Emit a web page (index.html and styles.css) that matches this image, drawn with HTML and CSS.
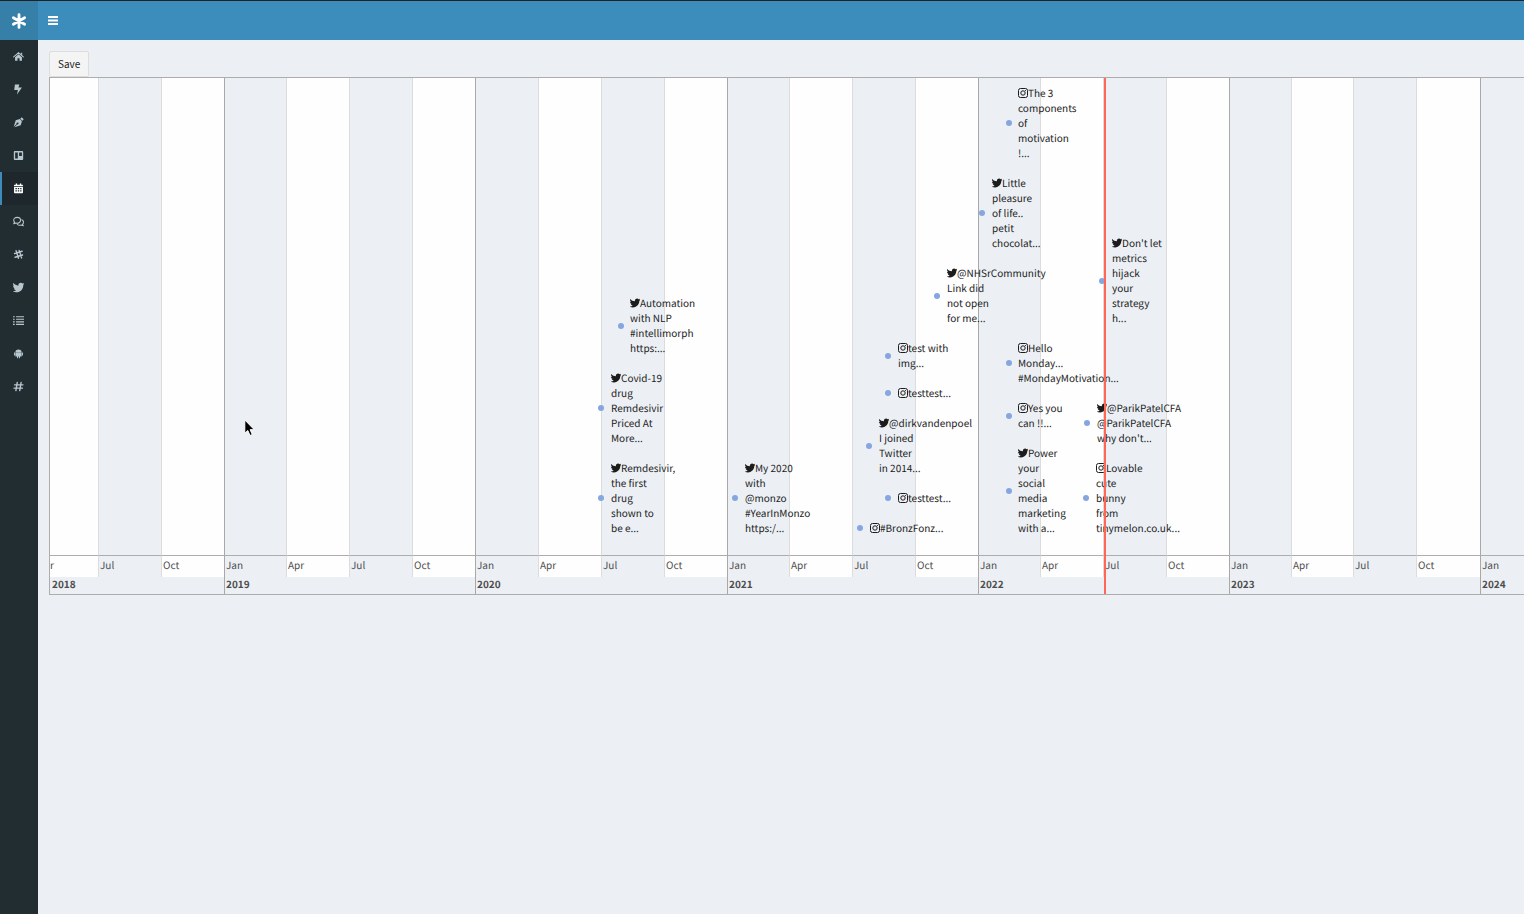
FILE: index.html
```
<!DOCTYPE html>
<html lang="en">
<head>
<meta charset="utf-8">
<title>Timeline</title>
<link rel="stylesheet" href="styles.css">
</head>
<body>
<svg class="defs" aria-hidden="true">
  <symbol id="twitter" viewBox="20 20 472 472"><path fill="currentColor" d="M459.37 151.716c.325 4.548.325 9.097.325 13.645 0 138.72-105.583 298.558-298.558 298.558-59.452 0-114.68-17.219-161.137-47.106 8.447.974 16.568 1.299 25.34 1.299 49.055 0 94.213-16.568 130.274-44.832-46.132-.975-84.792-31.188-98.112-72.772 6.498.974 12.995 1.624 19.818 1.624 9.421 0 18.843-1.3 27.614-3.573-48.081-9.747-84.143-51.98-84.143-102.985v-1.299c13.969 7.797 30.214 12.67 47.431 13.319-28.264-18.843-46.781-51.005-46.781-87.391 0-19.492 5.197-37.36 14.294-52.954 51.655 63.675 129.3 105.258 216.365 109.807-1.624-7.797-2.599-15.918-2.599-24.04 0-57.828 46.782-104.934 104.934-104.934 30.213 0 57.502 12.67 76.67 33.137 23.715-4.548 46.456-13.32 66.599-25.34-7.798 24.366-24.366 44.833-46.132 57.827 21.117-2.273 41.584-8.122 60.426-16.243-14.292 20.791-32.161 39.308-52.628 54.253z"/></symbol>
  <symbol id="instagram" viewBox="0 0 20 20"><g fill="none" stroke="currentColor" stroke-width="2"><rect x="1" y="1" width="18" height="18" rx="4"/><circle cx="10" cy="10" r="4.4"/></g><circle cx="15" cy="5" r="1.2" fill="currentColor"/></symbol>
</svg>
<div class="app">
  <nav class="sidebar" aria-label="Main">
    <a class="logo" href="#" aria-label="Home page"><svg viewBox="0 0 16 16"><path d="M8 1.6v12.8M2.4 4.8l11.2 6.4M13.6 4.8L2.4 11.2" stroke="currentColor" stroke-width="2.8" stroke-linecap="round"/></svg></a>
    <a href="#" aria-label="Home"><svg viewBox="0 0 16 16"><path fill="currentColor" d="M8 4.8l5 4.2v5H9.5v-3.6h-3V14H3V9z"/><path d="M1 8.6L8 2.6l7 6" fill="none" stroke="currentColor" stroke-width="1.5" stroke-linecap="round"/><path fill="currentColor" d="M11.4 2.6h2v4l-2-1.8z"/></svg></a>
    <a href="#" aria-label="Activity"><svg viewBox="0 0 16 16"><path fill="currentColor" d="M2.8 .6h6.400L8 5h5L5.800 15.400l1.300-6.600H1.800z"/></svg></a>
    <a href="#" aria-label="Write"><svg viewBox="0 0 16 16"><path fill="currentColor" d="M12.600.4l3 3-2 2-3-3zM9.900 3l3.100 3.100-1.800 5.900L2 15l4-4.200a1.500 1.500 0 1 0-.8-.8L1 14l3-9.200z"/></svg></a>
    <a href="#" aria-label="Board"><svg viewBox="0 0 16 16"><path fill="currentColor" fill-rule="evenodd" d="M2.500 1.500h11a1.300 1.300 0 0 1 1.300 1.300v10.400a1.300 1.300 0 0 1-1.300 1.300h-11a1.300 1.300 0 0 1-1.300-1.300V2.800a1.300 1.300 0 0 1 1.300-1.300zm.6 2v8.800H7V3.500zm5.800 0v5.300h4V3.500z"/></svg></a>
    <a class="active" href="#" aria-label="Calendar" aria-current="page"><svg viewBox="0 0 16 16"><path fill="currentColor" fill-rule="evenodd" d="M4 .8h2v1.700h4V.8h2v1.700h1.700a.8.8 0 0 1 .8.8v1.500h-13V3.300a.8.8 0 0 1 .8-.8H4zM1.500 5.800h13v8a1 1 0 0 1-1 1h-11a1 1 0 0 1-1-1zM3.600 7.300v1.800h2V7.300zm3.400 0v1.800h2V7.300zm3.400 0v1.800h2V7.300zm-6.800 3.400v1.800h2v-1.800zm3.400 0v1.800h2v-1.800zm3.400 0v1.800h2v-1.800z"/></svg></a>
    <a href="#" aria-label="Conversations"><svg viewBox="0 0 16 16"><g fill="none" stroke="currentColor" stroke-width="1.5" stroke-linejoin="round" stroke-linecap="round"><path d="M2.200 9 L1 11.400 L4 10.300 C7.500 11.200 11 9.300 11 6.300 C11 3.800 8.800 2 6 2 C3.200 2 1 3.800 1 6.300 C1 7.400 1.400 8.300 2.200 9 Z"/><path d="M12.800 5.400 C16 6.800 15.800 10.300 13.800 11.800 L15 14.200 L12 13.200 C9.800 13.900 7.400 13.200 6.200 12"/></g></svg></a>
    <a href="#" aria-label="Slack"><svg viewBox="0 0 16 16"><path d="M4.500 2.500L8 13.500M9 2l3.500 11M2.300 6.500l11-3.200M3 12l11-3.300" fill="none" stroke="currentColor" stroke-width="2" stroke-linecap="round"/></svg></a>
    <a href="#" aria-label="Twitter"><svg><use href="#twitter"/></svg></a>
    <a href="#" aria-label="List"><svg viewBox="0 0 16 16"><path d="M0 2.500h2.500M4.500 2.500H16M0 6.200h2.500M4.500 6.200H16M0 9.900h2.500M4.500 9.900H16M0 13.600h2.500M4.500 13.600H16" stroke="currentColor" stroke-width="1.700"/></svg></a>
    <a href="#" aria-label="Android"><svg viewBox="0 0 16 16"><path fill="currentColor" d="M3.500 6a4.500 4 0 0 1 9 0zM3.500 6.600h9v5.800h-2.400V15H8.600v-2.600H7.400V15H5.900v-2.600H3.500zM1.500 6.600H3v4.400H1.500zM13 6.600h1.500v4.400H13z"/></svg></a>
    <a href="#" aria-label="Hashtags"><svg viewBox="0 0 16 16"><path d="M6.200 2L4.200 14M11.800 2l-2 12M2.300 5.600h12.200M1.500 10.400h12.200" stroke="currentColor" stroke-width="2" stroke-linecap="round"/></svg></a>
  </nav>
  <div class="page">
    <header class="topbar">
      <button class="menu" type="button" aria-label="Toggle navigation"><svg viewBox="0 0 10 9"><path d="M0 1h10M0 4.500h10M0 8h10" stroke="currentColor" stroke-width="1.900"/></svg></button>
    </header>
    <main class="content">
      <button class="save" type="button">Save</button>
      <section class="timeline" id="timeline" aria-label="Timeline of posts"></section>
    </main>
  </div>
</div>
<svg class="pointer" viewBox="0 0 12 18" aria-hidden="true"><path d="M.8 1v13.200l3-2.700 2.200 5 2.300-1-2.200-4.800h4.200z" fill="#000" stroke="#fff" stroke-width="1"/></svg>
<script src="script.js"></script>
</body>
</html>
```

FILE: styles.css
```
* { box-sizing: border-box; }
body {
  margin: 0;
  font-family: "Noto Sans CJK SC", "Noto Sans", sans-serif;
  font-size: 10px;
  line-height: 15px;
  text-rendering: geometricPrecision;
  color: #1c1c1c;
  background: #ecf0f5;
}
button { font: inherit; color: inherit; }
.defs { position: absolute; width: 0; height: 0; }
.app { display: flex; min-height: 100vh; border-top: 1px solid #222; }
.sidebar { flex: 0 0 38px; display: flex; flex-direction: column; background: #222d32; }
.sidebar a {
  display: flex;
  align-items: center;
  justify-content: center;
  height: 33px;
  padding-right: 3px;
  border-left: 2px solid transparent;
  color: #b8c7ce;
}
.sidebar svg { width: 11px; height: 11px; }
.sidebar .active { background: #1e282c; border-left-color: #3c8dbc; color: #fff; }
.sidebar .logo { height: 39px; padding: 0; background: #367fa9; color: #fff; border-left: 0; }
.sidebar .logo svg { width: 16px; height: 16px; }
.page { flex: 1; min-width: 0; }
.topbar { display: flex; align-items: center; height: 39px; padding-left: 10px; background: #3c8dbc; }
.menu { display: flex; padding: 0; border: 0; background: none; color: #fff; }
.menu svg { width: 10px; height: 9px; }
.content { padding: 11px 0 0 11px; }
.save {
  display: block;
  height: 26px;
  padding: 0 8px 2px;
  border: 1px solid #ddd;
  border-radius: 2px;
  background: #f4f4f4;
}
.timeline {
  position: relative;
  display: flex;
  overflow: hidden;
  border: 1px solid #adadad;
  border-right: 0;
}
.quarter { flex: none; display: flex; flex-direction: column; }
.quarter:last-of-type { flex: 1 0 44px; }
.plot, .month, .year { border-left: 1px solid #dcdcdc; }
.plot { height: 478px; border-bottom: 1px solid #adadad; }
.month { height: 21px; padding: 1px; white-space: nowrap; color: #4d4d4d; }
.year { height: 17px; padding: 0 1px; line-height: 13px; font-weight: 700; color: #4d4d4d; border-left-color: transparent; }
.year-start > div { border-left-color: #a8a8a8; }
.shaded .plot, .shaded .month { background: #fefefe; }
.cut .plot, .cut .month { border-left: 0; }
.cut .month { padding-left: 0; }
.item { position: absolute; white-space: nowrap; }
.item svg { width: 10px; height: 10px; vertical-align: -1px; }
.dot { position: absolute; width: 6px; height: 6px; border-radius: 50%; background: #86a6e0; }
.now { position: absolute; top: 0; bottom: 0; width: 2px; background: #ff6655; }
.pointer { position: absolute; left: 244px; top: 419px; width: 12px; height: 18px; }
```

FILE: script.js
```
const timeline = document.getElementById("timeline");

// Quarter columns: width in pixels at the current zoom, starting April 2018
const widths = [48, 63, 63, 62, 63, 63, 63, 63, 63, 63, 63, 62, 63, 63, 63, 62, 63, 63, 63, 62, 62, 63, 64, 44];
const months = ["Jan", "Apr", "Jul", "Oct"];
widths.forEach((width, i) => {
  const q = (i + 1) % 4;
  const year = 2018 + Math.floor((i + 1) / 4);
  const column = document.createElement("div");
  column.className = "quarter" + (q % 2 ? " shaded" : "") + (q === 0 ? " year-start" : "") + (i === 0 ? " cut" : "");
  column.style.width = width + "px";
  // The first month is scrolled almost out of view: only its last letter shows
  column.innerHTML = `<div class="plot"></div><div class="month">${i === 0 ? "r" : months[q]}</div><div class="year">${q === 0 || i === 0 ? year : ""}</div>`;
  timeline.append(column);
});

// Posts: network, text left, text top, dot left, dot top, lines
const posts = [
  ["instagram", 968, 7, 956, 42, "The 3|components|of|motivation|!..."],
  ["twitter", 942, 97, 929, 132, "Little|pleasure|of life..|petit|chocolat..."],
  ["twitter", 1062, 157, 1049, 200, "Don't let|metrics|hijack|your|strategy|h..."],
  ["twitter", 897, 187, 884, 215, "@NHSrCommunity|Link did|not open|for me..."],
  ["twitter", 580, 217, 568, 245, "Automation|with NLP|#intellimorph|https:..."],
  ["instagram", 848, 262, 835, 275, "test with|img..."],
  ["instagram", 968, 262, 956, 282, "Hello|Monday...|#MondayMotivation..."],
  ["twitter", 561, 292, 548, 327, "Covid-19|drug|Remdesivir|Priced At|More..."],
  ["instagram", 848, 307, 835, 312, "testtest..."],
  ["instagram", 968, 322, 956, 335, "Yes you|can !!..."],
  ["twitter", 1047, 322, 1034, 342, "@ParikPatelCFA|@ParikPatelCFA|why don't..."],
  ["twitter", 829, 337, 816, 365, "@dirkvandenpoel|I joined|Twitter|in 2014..."],
  ["twitter", 968, 367, 956, 410, "Power|your|social|media|marketing|with a..."],
  ["twitter", 561, 382, 548, 417, "Remdesivir,|the first|drug|shown to|be e..."],
  ["twitter", 695, 382, 682, 417, "My 2020|with|@monzo|#YearInMonzo|https:/..."],
  ["instagram", 1046, 382, 1033, 417, "Lovable|cute|bunny|from|tinymelon.co.uk..."],
  ["instagram", 848, 412, 835, 417, "testtest..."],
  ["instagram", 820, 442, 807, 447, "#BronzFonz..."]
];
for (const [network, left, top, dotLeft, dotTop, text] of posts) {
  timeline.insertAdjacentHTML("beforeend",
    `<span class="dot" style="left:${dotLeft}px;top:${dotTop}px"></span>` +
    `<article class="item" style="left:${left}px;top:${top}px"><svg><use href="#${network}"/></svg>${text.split("|").join("<br>")}</article>`);
}
timeline.insertAdjacentHTML("beforeend", '<span class="now" style="left:1054px"></span>');
```
